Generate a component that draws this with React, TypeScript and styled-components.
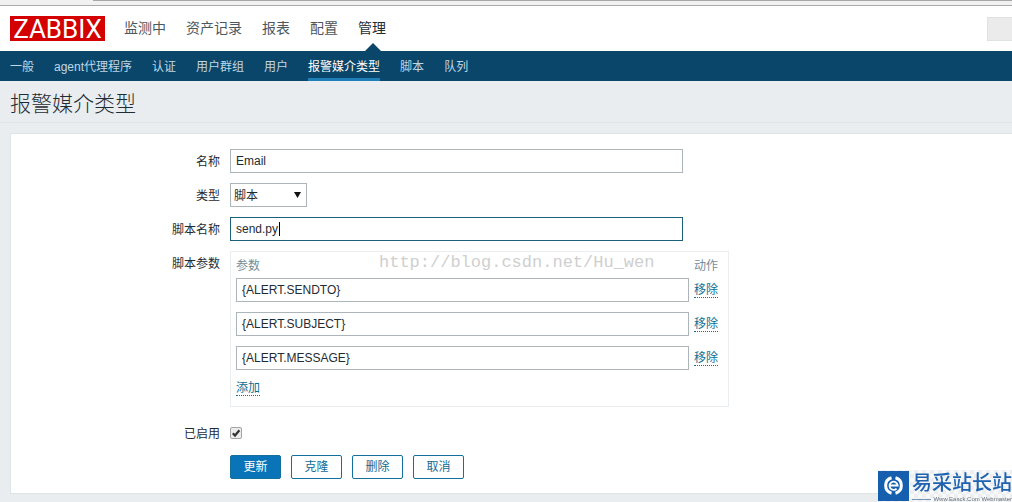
import React from 'react';
import styled, { createGlobalStyle } from 'styled-components';

const GlobalStyle = createGlobalStyle`
  * { box-sizing: border-box; }
  body {
    margin: 0;
    background: #e9edf0;
    color: #1f2c33;
    font: 12px/18px "Liberation Sans", "Noto Sans CJK SC", sans-serif;
    overflow-x: hidden;
  }
  input, select, button { font: inherit; color: inherit; }
`;

const BrowserEdge = styled.div`
  height: 6px;
  padding-left: 93px;
  background: #f1f1f1;
  border-bottom: 1px solid #ababab;
  &::before {
    content: '';
    display: block;
    height: 1px;
    background: #a6a6a6;
  }
`;

const Header = styled.header`
  display: flex;
  align-items: center;
  gap: 19px;
  height: 45px;
  padding-left: 10px;
  background: #fff;
`;

const Logo = styled.a`
  width: 95px;
  height: 25px;
  background: #d40000;
  color: #fff;
  font: 26px/26px Roboto, sans-serif;
  text-align: center;
  text-decoration: none;
`;

const MainNav = styled.nav`
  display: flex;
  gap: 20px;
  height: 45px;
`;

const MainLink = styled.a<{ $active?: boolean }>`
  position: relative;
  color: ${(p) => (p.$active ? '#1f2c33' : '#4c5860')};
  font-size: 14px;
  line-height: 44px;
  text-decoration: none;
  &::after {
    content: '';
    display: ${(p) => (p.$active ? 'block' : 'none')};
    position: absolute;
    left: 50%;
    bottom: 0;
    margin-left: -7px;
    border: 8px solid transparent;
    border-top: 0;
    border-bottom-color: #0a466a;
  }
`;

const SearchBox = styled.div`
  width: 25px;
  height: 24px;
  margin-left: auto;
  background: #ebebeb;
  border: 1px solid #dfe2e3;
  border-right: 0;
`;

const SubNav = styled.nav`
  display: flex;
  gap: 20px;
  height: 30px;
  padding-left: 10px;
  background: #0a466a;
`;

const SubLink = styled.a<{ $active?: boolean }>`
  height: 30px;
  line-height: 32px;
  color: ${(p) => (p.$active ? '#fff' : '#c0d7e4')};
  border-bottom: 3px solid ${(p) => (p.$active ? '#1f7fb8' : 'transparent')};
  text-decoration: none;
`;

const Title = styled.h1`
  height: 42px;
  margin: 0 0 10px;
  padding-left: 10px;
  border-bottom: 1px solid #dfe4e7;
  font-size: 21px;
  font-weight: 300;
  line-height: 46px;
`;

const Panel = styled.form`
  display: grid;
  gap: 10px;
  margin: 0 0 8px 10px;
  padding: 15px 0 14px;
  background: #fff;
  border: 1px solid #dfe4e7;
  border-right: 0;
`;

const Row = styled.div`
  display: grid;
  grid-template-columns: 209px minmax(0, 1fr);
  column-gap: 10px;
  line-height: 24px;
`;

const Label = styled.label`
  height: 24px;
  line-height: 26px;
  text-align: right;
`;

const Field = styled.div`
  position: relative;
  display: flex;
  align-items: center;
`;

const TextInput = styled.input<{ $focused?: boolean }>`
  display: block;
  width: 100%;
  max-width: 453px;
  height: 24px;
  padding: 0 5px;
  background: #fff;
  border: 1px solid ${(p) => (p.$focused ? '#1b5f78' : '#acb5b9')};
  border-radius: 0;
  outline: 0;
`;

const Caret = styled.i`
  position: absolute;
  left: 49px;
  top: 5px;
  width: 1px;
  height: 14px;
  background: #000;
`;

const SelectWrap = styled.div`
  position: relative;
  width: 77px;
  height: 24px;
  svg {
    position: absolute;
    right: 6px;
    top: 9px;
    pointer-events: none;
  }
`;

const Select = styled.select`
  appearance: none;
  display: block;
  width: 100%;
  height: 24px;
  padding: 0 3px;
  background: #fff;
  border: 1px solid #acb5b9;
  border-radius: 0;
`;

const ParamBox = styled.div`
  width: 100%;
  max-width: 499px;
  margin-bottom: 4px;
  padding: 5px;
  border: 1px solid #ebeef0;
`;

const ParamTable = styled.table`
  width: 100%;
  border-collapse: collapse;
  th {
    height: 16px;
    padding: 2px 0 0;
    color: #768d99;
    font-weight: 400;
    line-height: 14px;
    text-align: left;
  }
  td { height: 34px; padding: 0; line-height: 24px; }
  th:last-child, tbody td:last-child { width: 34px; padding-left: 5px; }
  tfoot td { height: 26px; }
`;

const ActionLink = styled.a`
  display: block;
  width: max-content;
  margin-top: 1px;
  color: #0e6f93;
  line-height: 14px;
  border-bottom: 1px dotted #0e6f93;
  text-decoration: none;
`;

const Watermark = styled.div`
  position: absolute;
  left: 149px;
  top: 0;
  color: #cfcfcf;
  font: 17px/24px "Liberation Mono", monospace;
`;

const Checkbox = styled.input`
  appearance: none;
  display: grid;
  place-items: center;
  width: 12px;
  height: 12px;
  margin: 0;
  background: #ececec;
  border: 1px solid #a5a5a5;
  border-radius: 2px;
`;

const CheckWrap = styled.div`
  position: relative;
  height: 12px;
  svg {
    position: absolute;
    left: 0;
    top: 0;
    pointer-events: none;
    opacity: 0;
  }
  input:checked + svg { opacity: 1; }
`;

const Buttons = styled.div`
  grid-column: 2;
  display: flex;
  gap: 10px;
`;

const Button = styled.button<{ $primary?: boolean }>`
  min-width: 51px;
  height: 24px;
  padding: 1px 11px 0;
  background: ${(p) => (p.$primary ? '#0a74b8' : '#fff')};
  color: ${(p) => (p.$primary ? '#fff' : '#136c94')};
  border: 1px solid #136f9c;
  border-radius: 2px;
  line-height: 21px;
`;

const SiteBadge = styled.aside`
  position: fixed;
  right: 0;
  bottom: 0;
  display: flex;
  gap: 3px;
  width: 134px;
  height: 32px;
  color: #1e62b0;
  background: conic-gradient(#eceef0 25%, #f8f9fa 0 50%, #eceef0 0 75%, #f8f9fa 0) 0 0 / 8px 8px;
  svg { flex: none; }
`;

const BadgeText = styled.div`
  flex: none;
  width: 100px;
  font-size: 20px;
  font-weight: 500;
  line-height: 26px;
  white-space: nowrap;
`;

const BadgeCaption = styled.div`
  display: flex;
  align-items: center;
  gap: 2px;
  color: #68717d;
  font-size: 6px;
  font-weight: 400;
  line-height: 6px;
  &::before {
    content: '';
    flex: 1;
    height: 1px;
    background: #7792b5;
  }
`;

const mainItems = ['监测中', '资产记录', '报表', '配置', '管理'];
const subItems = ['一般', 'agent代理程序', '认证', '用户群组', '用户', '报警媒介类型', '脚本', '队列'];
const params = ['{ALERT.SENDTO}', '{ALERT.SUBJECT}', '{ALERT.MESSAGE}'];

export default function App() {
  return (
    <>
      <GlobalStyle />
      <BrowserEdge />
      <Header>
        <Logo href="#">ZABBIX</Logo>
        <MainNav>
          {mainItems.map((t) => (
            <MainLink key={t} href="#" $active={t === '管理'}>{t}</MainLink>
          ))}
        </MainNav>
        <SearchBox />
      </Header>
      <SubNav>
        {subItems.map((t) => (
          <SubLink key={t} href="#" $active={t === '报警媒介类型'}>{t}</SubLink>
        ))}
      </SubNav>
      <main>
        <Title>报警媒介类型</Title>
        <Panel onSubmit={(e) => e.preventDefault()}>
          <Row>
            <Label htmlFor="name">名称</Label>
            <Field><TextInput id="name" defaultValue="Email" /></Field>
          </Row>
          <Row>
            <Label htmlFor="type">类型</Label>
            <SelectWrap>
              <Select id="type"><option>脚本</option></Select>
              <svg width="7" height="6" viewBox="0 0 7 6"><path d="M0 0h7L3.5 6z" fill="#111" /></svg>
            </SelectWrap>
          </Row>
          <Row>
            <Label htmlFor="script">脚本名称</Label>
            <Field><TextInput id="script" $focused defaultValue="send.py" /><Caret /></Field>
          </Row>
          <Row>
            <Label as="span">脚本参数</Label>
            <Field>
              <ParamBox>
                <ParamTable>
                  <thead><tr><th>参数</th><th>动作</th></tr></thead>
                  <tbody>
                    {params.map((p) => (
                      <tr key={p}>
                        <td><TextInput aria-label="参数" defaultValue={p} /></td>
                        <td><ActionLink href="#">移除</ActionLink></td>
                      </tr>
                    ))}
                  </tbody>
                  <tfoot><tr><td colSpan={2}><ActionLink href="#">添加</ActionLink></td></tr></tfoot>
                </ParamTable>
              </ParamBox>
              <Watermark>http://blog.csdn.net/Hu_wen</Watermark>
            </Field>
          </Row>
          <Row>
            <Label htmlFor="enabled">已启用</Label>
            <Field>
              <CheckWrap>
                <Checkbox id="enabled" type="checkbox" defaultChecked />
                <svg width="12" height="12" viewBox="0 0 12 12">
                  <path d="M2.8 6.2 5 8.5 9.4 3.2" fill="none" stroke="#333" strokeWidth="2.2" />
                </svg>
              </CheckWrap>
            </Field>
          </Row>
          <Row>
            <Buttons>
              <Button type="submit" $primary>更新</Button>
              <Button type="button">克隆</Button>
              <Button type="button">删除</Button>
              <Button type="button">取消</Button>
            </Buttons>
          </Row>
        </Panel>
      </main>
      <SiteBadge>
        <svg width="31" height="32" viewBox="0 0 31 32">
          <path d="M0 1h31v30H0z" fill="#165fae" />
          <g fill="none" stroke="#fff">
            <path d="M13.5 7.8A8 8 0 0 0 13.5 23.2" strokeWidth="3" />
            <path d="M17.5 7.8A8 8 0 0 1 17.5 23.2" strokeWidth="3" />
            <path d="M11.5 15.5h8.2A4.1 4.1 0 1 0 18.6 18.6" strokeWidth="1.8" />
          </g>
        </svg>
        <BadgeText>
          易采站长站
          <BadgeCaption>Www.Easck.Com Webmaster</BadgeCaption>
        </BadgeText>
      </SiteBadge>
    </>
  );
}
